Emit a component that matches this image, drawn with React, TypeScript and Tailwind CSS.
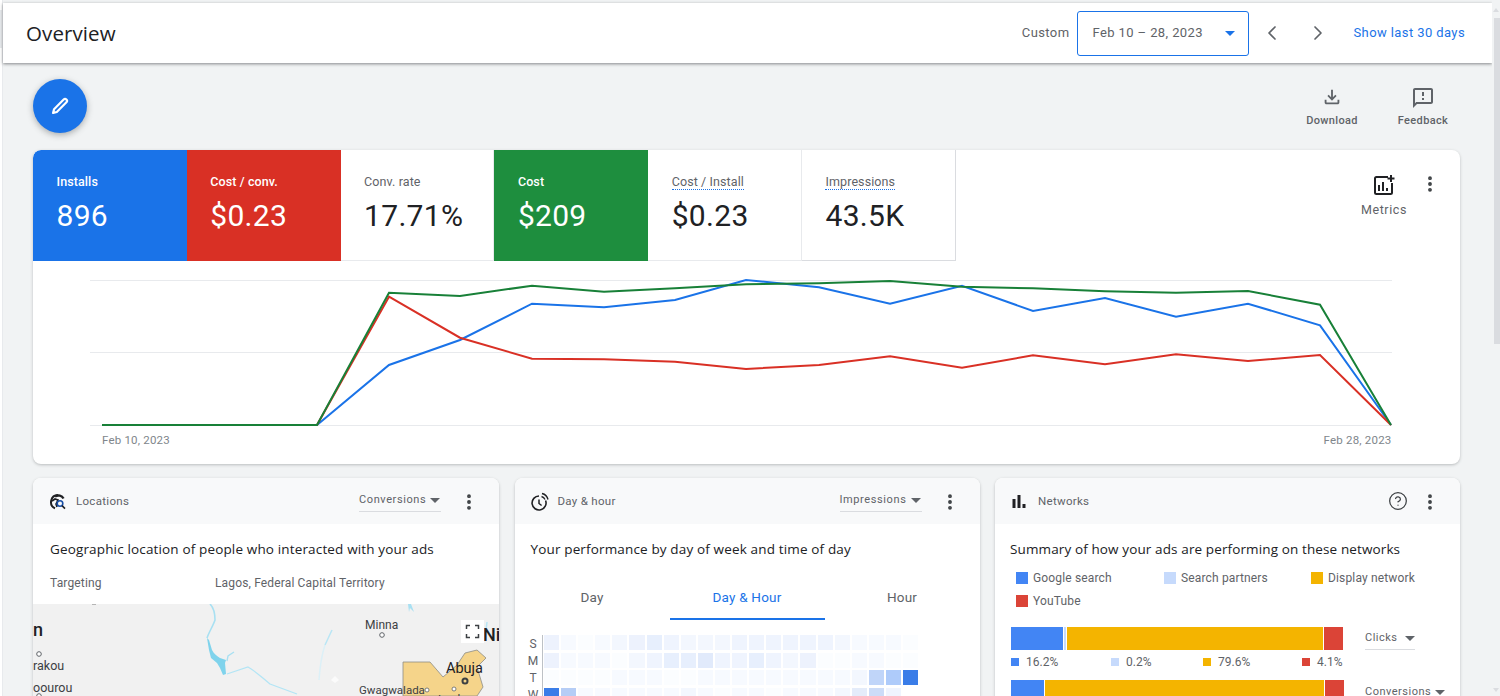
import { ChevronLeft, ChevronRight, CircleHelp, EllipsisVertical } from "lucide-react";

const sans = "font-['Roboto',sans-serif]";
const heading = "font-['Open_Sans',sans-serif]";

type Metric = {
  label: string;
  value: string;
  tile: string;
  dotted?: boolean;
};

const metrics: Metric[] = [
  { label: "Installs", value: "896", tile: "bg-[#1a73e8] text-white rounded-tl-lg" },
  { label: "Cost / conv.", value: "$0.23", tile: "bg-[#d93025] text-white" },
  { label: "Conv. rate", value: "17.71%", tile: "bg-white text-[#202124] border-r border-b border-[#e8eaed]" },
  { label: "Cost", value: "$209", tile: "bg-[#1e8e3e] text-white" },
  { label: "Cost / Install", value: "$0.23", tile: "bg-white text-[#202124] border-r border-b border-[#e8eaed]", dotted: true },
  { label: "Impressions", value: "43.5K", tile: "bg-white text-[#202124] border-r border-b border-[#dadce0]", dotted: true },
];

const chartX = [102, 174, 245, 317, 389, 460, 532, 604, 675, 746, 819, 890, 962, 1033, 1105, 1176, 1248, 1320, 1391];
const blueY = [425, 425, 425, 425, 365, 340, 303.7, 307.3, 300, 280, 287.3, 303.7, 285.7, 311, 298, 316.7, 303.7, 325.3, 425];
const redY = [425, 425, 425, 425, 296.7, 337.7, 358.7, 359.3, 361.7, 369, 365, 356.3, 367.7, 355.3, 364.3, 354.3, 361, 355, 425];
const greenY = [425, 425, 425, 425, 292.7, 296, 285.7, 291.7, 288.3, 284.3, 283.3, 281, 286.7, 288.3, 291.3, 292.7, 291, 304.7, 425];

function linePoints(ys: number[]) {
  return ys.map((y, i) => `${chartX[i] - 33},${y - 262}`).join(" ");
}

const shades: Record<string, string> = {
  a: "bg-[#fbfdff]",
  b: "bg-[#f7faff]",
  c: "bg-[#f3f7fe]",
  d: "bg-[#eff4fe]",
  e: "bg-[#edf2fd]",
  f: "bg-[#e7effd]",
  g: "bg-[#e1eafb]",
  h: "bg-[#c0d5f9]",
  i: "bg-[#aecbfa]",
  j: "bg-[#3a7de8]",
  k: "bg-[#b5cdf6]",
  l: "bg-[#e4ecfa]",
  m: "bg-[#ccdcf8]",
  z: "bg-white",
};

const heatRows = [
  { day: "S", cells: "ebabcefdcccddddddcbbba" },
  { day: "M", cells: "ebbbacdffgddfdceaabbaa" },
  { day: "T", cells: "aaaabbbaabbbbbbbbbchij" },
  { day: "W", cells: "jkbbbbbbcbabbabbbclmdz" },
];

function Kebab() {
  return <EllipsisVertical size={20} strokeWidth={2.6} className="text-[#3c4043]" />;
}

function CardHeader({ icon, title, control }: { icon: React.ReactNode; title: string; control: React.ReactNode }) {
  return (
    <div className="flex h-[46px] items-center bg-[#f8f9fa] pl-4 pr-[20px] pt-[2px]">
      <div className="flex w-[27px] justify-start">{icon}</div>
      <span className="text-[11.5px] tracking-[0.3px] text-[#5f6368]">{title}</span>
      <div className="ml-auto flex items-center">
        {control}
        <div className="ml-[18px]">
          <Kebab />
        </div>
      </div>
    </div>
  );
}

function MetricPicker({ label }: { label: string }) {
  return (
    <div className="flex h-[20px] w-[82px] items-center justify-between border-b border-[#dadce0] pb-[3px] text-[11px] tracking-[0.6px] text-[#5f6368]">
      {label}
      <span className="mr-[1px] h-0 w-0 border-x-[5px] border-t-[5px] border-x-transparent border-t-[#5f6368]" />
    </div>
  );
}

function LocationsIcon() {
  return (
    <svg width="18" height="18" viewBox="0 0 18 18" fill="none">
      <path d="M9 2a7 7 0 0 0-3 13.3" stroke="#202124" strokeWidth="2" />
      <path d="M6 3.5c3-2 7-1 8.5 2" stroke="#202124" strokeWidth="2.4" />
      <path d="M3 8l3-2 3 1-2 4 1 3" stroke="#202124" strokeWidth="1.6" />
      <circle cx="11" cy="10.5" r="2.8" stroke="#174ea6" strokeWidth="1.6" />
      <path d="M13 12.6l3 3" stroke="#202124" strokeWidth="1.6" />
    </svg>
  );
}

function ClockIcon() {
  return (
    <svg width="20" height="20" viewBox="0 0 20 20" fill="none" stroke="#202124">
      <path d="M14.6 8.5A7 7 0 1 1 8 4" strokeWidth="1.6" />
      <path d="M8 7.5v4l2.6 2" strokeWidth="1.5" />
      <path d="M10.5 4.5a5 5 0 0 1 3.5 3" strokeWidth="1.3" />
      <path d="M11 1.5a8 8 0 0 1 6 6" strokeWidth="1.4" />
    </svg>
  );
}

function BarsIcon() {
  return (
    <svg width="16" height="16" viewBox="0 0 16 16" fill="#202124">
      <rect x="1.5" y="5" width="3" height="9" />
      <rect x="6.5" y="1" width="3" height="13" />
      <rect x="11.5" y="10" width="3" height="4" />
    </svg>
  );
}

function MetricsIcon() {
  return (
    <svg width="22" height="22" viewBox="0 0 22 22" fill="none" stroke="#202124" strokeWidth="2">
      <path d="M15 3H3.5A1.5 1.5 0 0 0 2 4.5v14A1.5 1.5 0 0 0 3.5 20h14a1.5 1.5 0 0 0 1.5-1.5V9" />
      <path d="M6 11v6M10 8v9M14 14v3" />
      <path d="M18 1v7M14.5 4.5h7" />
    </svg>
  );
}

function DownloadIcon() {
  return (
    <svg width="22" height="22" viewBox="0 0 24 24" fill="#5f6368">
      <path d="M12 16l-5-5 1.4-1.45 2.6 2.6V4h2v8.15l2.6-2.6L17 11l-5 5zM6 20c-.55 0-1.02-.196-1.412-.587A1.93 1.93 0 0 1 4 18v-3h2v3h12v-3h2v3c0 .55-.196 1.02-.587 1.413A1.93 1.93 0 0 1 18 20H6z" />
    </svg>
  );
}

function FeedbackIcon() {
  return (
    <svg width="24" height="24" viewBox="0 0 24 24" fill="#5f6368">
      <path d="M20 2H4c-1.1 0-2 .9-2 2v18l4-4h14c1.1 0 2-.9 2-2V4c0-1.1-.9-2-2-2zm0 14H5.17L4 17.17V4h16v12zM11 12h2v2h-2zm0-6h2v4h-2z" />
    </svg>
  );
}

function PencilIcon() {
  return (
    <svg width="22" height="22" viewBox="0 0 24 24" fill="none" stroke="#fff" strokeWidth="2.4" strokeLinejoin="round">
      <path d="M4.5 19.5l1-4L16 5a2.1 2.1 0 0 1 3 3L8.5 18.5z" />
    </svg>
  );
}

function MapPanel() {
  return (
    <div className="relative h-[92px] overflow-hidden bg-[#f1f1f1] text-[#3c4043]">
      <svg className="absolute inset-0" width="466" height="92" viewBox="0 0 466 92" fill="none">
        <path d="M177 0c3 3 5 10 5 16-2 6-6 12-8 18" stroke="#a8e0f2" strokeWidth="1.6" />
        <path d="M194 70l21-7c6 3 12 9 22 17l27 10" stroke="#b3e5f5" strokeWidth="1.3" />
        <path d="M174 34l2 2 3 10c2 4 5 6 8 8l6 2-1 3 1 11-3 1-3-7-3-5-6-5-2-8z" fill="#7fd3ec" />
        <path d="M194 57l1-5 6-4" stroke="#a8e0f2" strokeWidth="1.3" />
        <path d="M299 26l-7 15" stroke="#b9e6f5" strokeWidth="1.5" />
        <path d="M292 41c-3 9-5 20-6 35" stroke="#dcf0f7" strokeWidth="1.5" />
        <path d="M375 0l1 8 1-4 4 4-3-8z" fill="#a8e0f2" />
        <path d="M454 18l-1 8" stroke="#b9e6f5" strokeWidth="1.5" />
        <path d="M302 72l4 4-4 3-4-3z" fill="#fbfbfb" />
        <path d="M370 92V58h27l13 15 14-12 8-12 12-3 9 8-9 9 6 20-6 9z" fill="#f5d48a" stroke="#8d8d86" strokeWidth="0.8" />
        <circle cx="349" cy="31" r="2.3" stroke="#5f6368" strokeWidth="1" fill="#fff" />
        <circle cx="6" cy="50" r="2.3" stroke="#5f6368" strokeWidth="1" fill="#fff" />
        <circle cx="6" cy="92" r="2.3" stroke="#5f6368" strokeWidth="1" fill="#fff" />
        <circle cx="432" cy="77" r="3.5" fill="#3c4043" />
        <circle cx="432" cy="77" r="1.5" fill="#f5d48a" />
        <circle cx="394" cy="86" r="2" stroke="#5f6368" strokeWidth="0.8" fill="#fff" />
        <circle cx="421" cy="85" r="2" stroke="#5f6368" strokeWidth="0.8" fill="#fff" />
        <path d="M59 0h4" stroke="#b5b5b5" strokeWidth="2" />
      </svg>
      <span className="absolute left-0 top-[15px] text-[18px] font-medium leading-[22px] text-[#202124]">n</span>
      <span className="absolute left-0 top-[54px] text-[12.5px] leading-4">rakou</span>
      <span className="absolute left-0 top-[76px] text-[12.5px] leading-4">oourou</span>
      <span className="absolute left-[332px] top-[13px] text-[12px] leading-4">Minna</span>
      <span className="absolute left-[326px] top-[78px] text-[11.5px] leading-4">Gwagwalada</span>
      <span className="absolute left-[413px] top-[55px] text-[14.5px] leading-5 text-[#202124]">Abuja</span>
      <span className="absolute left-[405px] top-[88px] text-[12px] leading-4">Lugbe</span>
      <span className="absolute left-[450px] top-[20px] text-[18px] font-medium leading-[22px] text-[#202124]">Ni</span>
      <div className="absolute left-[428px] top-[16px] flex h-[23px] w-[23px] items-center justify-center bg-white">
        <svg width="15" height="15" viewBox="0 0 15 15" fill="none" stroke="#3c4043" strokeWidth="1.5">
          <path d="M1.5 5V1.5H5M10 1.5h3.5V5M13.5 10v3.5H10M5 13.5H1.5V10" />
        </svg>
      </div>
    </div>
  );
}

function LocationsCard() {
  return (
    <section className="h-[260px] overflow-hidden rounded-t-lg bg-white shadow-[0_1px_3px_rgba(60,64,67,0.3)]">
      <CardHeader icon={<LocationsIcon />} title="Locations" control={<MetricPicker label="Conversions" />} />
      <p className={`${heading} pl-[17px] pt-4 text-[13.5px] leading-[18px] tracking-[0.15px] text-[#202124]`}>Geographic location of people who interacted with your ads</p>
      <div className="flex pl-[17px] pt-[17px] text-[12px] leading-4 tracking-[0.15px] text-[#5f6368]">
        <span className="w-[165px]">Targeting</span>
        <span>Lagos, Federal Capital Territory</span>
      </div>
      <div className="pt-[13px]">
        <MapPanel />
      </div>
    </section>
  );
}

function DayHourCard() {
  return (
    <section className="h-[260px] overflow-hidden rounded-t-lg bg-white shadow-[0_1px_3px_rgba(60,64,67,0.3)]">
      <CardHeader icon={<ClockIcon />} title="Day & hour" control={<MetricPicker label="Impressions" />} />
      <p className={`${heading} pl-[16px] pt-4 text-[13.5px] leading-[18px] tracking-[0.15px] text-[#202124]`}>Your performance by day of week and time of day</p>
      <div className="mt-[22px] flex h-[40px] text-[13.5px] tracking-[0.2px] text-[#5f6368]">
        <div className="flex w-[155px] items-center justify-center pb-[6px]">Day</div>
        <div className="flex w-[155px] items-center justify-center border-b-2 border-[#1a73e8] pb-[4px] text-[#1a73e8]">Day &amp; Hour</div>
        <div className="flex w-[155px] items-center justify-center pb-[6px]">Hour</div>
      </div>
      <div className="ml-[10px] mt-[15px] flex">
        <div className="flex w-[17px] flex-col text-[12px] text-[#5f6368]">
          {heatRows.map((row) => (
            <span key={row.day} className="flex h-[17px] items-center justify-center">{row.day}</span>
          ))}
        </div>
        <div className="grid grid-cols-[repeat(22,15.1px)] gap-[2px] border-l border-[#bdc1c6] pl-[1.5px]">
          {heatRows.flatMap((row) =>
            row.cells.split("").map((code, i) => <div key={`${row.day}-${i}`} className={`h-[15px] ${shades[code]}`} />),
          )}
        </div>
      </div>
    </section>
  );
}

function LegendItem({ color, label, width }: { color: string; label: string; width: string }) {
  return (
    <div className={`flex h-[23px] items-center ${width}`}>
      <span className={`mr-[5px] h-[12px] w-[12px] ${color}`} />
      {label}
    </div>
  );
}

function ShareLabel({ color, label, width }: { color: string; label: string; width: string }) {
  return (
    <div className={`flex items-center ${width}`}>
      <span className={`mr-[7px] h-[8px] w-[8px] ${color}`} />
      {label}
    </div>
  );
}

function NetworksCard() {
  return (
    <section className="h-[260px] overflow-hidden rounded-t-lg bg-white shadow-[0_1px_3px_rgba(60,64,67,0.3)]">
      <CardHeader
        icon={<BarsIcon />}
        title="Networks"
        control={<CircleHelp size={20} strokeWidth={1.5} className="-mr-[6px] mb-[2px] text-[#3c4043]" />}
      />
      <p className={`${heading} pl-[15px] pt-4 text-[13.5px] leading-[18px] tracking-[0.12px] text-[#202124]`}>Summary of how your ads are performing on these networks</p>
      <div className="flex flex-wrap pl-[21px] pt-[8px] text-[12px] tracking-[0.15px] text-[#5f6368]">
        <LegendItem color="bg-[#4285f4]" label="Google search" width="w-[148px]" />
        <LegendItem color="bg-[#c6dafc]" label="Search partners" width="w-[147px]" />
        <LegendItem color="bg-[#f4b400]" label="Display network" width="w-[129px]" />
        <LegendItem color="bg-[#db4437]" label="YouTube" width="w-[148px]" />
      </div>
      <div className="pl-4 pt-[15px]">
        <div className="flex items-start">
          <div className="w-[333px]">
            <div className="flex h-[23px] gap-[1px]">
              <div className="w-[52px] bg-[#4285f4]" />
              <div className="w-[2px] bg-[#c6dafc]" />
              <div className="w-[256px] bg-[#f4b400]" />
              <div className="w-[19px] bg-[#db4437]" />
            </div>
            <div className="mt-[3px] flex text-[12px] text-[#5f6368]">
              <ShareLabel color="bg-[#4285f4]" label="16.2%" width="w-[100px]" />
              <ShareLabel color="bg-[#c6dafc]" label="0.2%" width="w-[92px]" />
              <ShareLabel color="bg-[#f4b400]" label="79.6%" width="w-[99px]" />
              <ShareLabel color="bg-[#db4437]" label="4.1%" width="w-[42px]" />
            </div>
          </div>
          <div className="ml-[21px] mt-[3px] flex h-[20px] w-[50px] items-center justify-between border-b border-[#dadce0] pb-[2px] text-[11px] tracking-[0.5px] text-[#5f6368]">
            Clicks
            <span className="h-0 w-0 border-x-[5px] border-t-[5px] border-x-transparent border-t-[#5f6368]" />
          </div>
        </div>
        <div className="mt-[9px] flex items-start">
          <div className="flex h-[23px] w-[333px] gap-[1px]">
            <div className="w-[33px] bg-[#4285f4]" />
            <div className="w-[279px] bg-[#f4b400]" />
            <div className="w-[19px] bg-[#db4437]" />
          </div>
          <div className="ml-[21px] mt-[4px] flex w-[80px] items-center justify-between text-[11px] tracking-[0.5px] text-[#5f6368]">
            Conversions
            <span className="h-0 w-0 border-x-[5px] border-t-[5px] border-x-transparent border-t-[#5f6368]" />
          </div>
        </div>
      </div>
    </section>
  );
}

export default function App() {
  return (
    <div className={`${sans} flex h-[696px] w-[1500px] overflow-hidden bg-[#f1f3f4]`}>
      <div className="w-[3px] shrink-0 border-r border-[#e8eaed] bg-white pt-[10px]">
        <div className="h-[38px] bg-[#e8eaed]" />
      </div>
      <main className="w-[1489px] shrink-0">
        <header className="mt-[3px] flex h-[60px] items-center bg-white pl-[23px] pr-[27px] shadow-[0_1px_3px_rgba(60,64,67,0.6)]">
          <h1 className={`${heading} text-[20.5px] tracking-[0.1px] text-[#202124]`}>Overview</h1>
          <div className="ml-auto flex items-center">
            <span className="mr-[8px] text-[13px] tracking-[0.4px] text-[#5f6368]">Custom</span>
            <div className="flex h-[45px] w-[172px] items-center justify-between rounded-[3px] border-[1.5px] border-[#1a73e8] pl-[14px] pr-[13px] text-[13px] tracking-[0.4px] text-[#5f6368]">
              Feb 10 – 28, 2023
              <span className="h-0 w-0 border-x-[5px] border-t-[5px] border-x-transparent border-t-[#1a73e8]" />
            </div>
            <ChevronLeft size={24} strokeWidth={1.7} className="ml-[11px] text-[#5f6368]" />
            <ChevronRight size={24} strokeWidth={1.7} className="ml-[22px] text-[#5f6368]" />
            <a className="ml-[23px] text-[13px] tracking-[0.4px] text-[#1a73e8]">Show last 30 days</a>
          </div>
        </header>

        <div className="pl-[30px] pr-[32px]">
          <div className="flex h-[87px] pt-[16px]">
            <button className="flex h-[54px] w-[54px] items-center justify-center rounded-full bg-[#1a73e8] shadow-[0_2px_6px_rgba(60,64,67,0.4)]">
              <PencilIcon />
            </button>
            <div className="ml-auto flex pr-[7px] pt-[7px] text-[11px] font-medium tracking-[0.35px] text-[#5f6368]">
              <div className="flex w-[60px] flex-col items-center gap-[5px]">
                <DownloadIcon />
                Download
              </div>
              <div className="ml-[31px] flex w-[60px] flex-col items-center gap-[3px]">
                <FeedbackIcon />
                Feedback
              </div>
            </div>
          </div>

          <section className="h-[314px] overflow-hidden rounded-lg bg-white shadow-[0_1px_3px_rgba(60,64,67,0.3)]">
            <div className="flex h-[112px]">
              {metrics.map((m) => (
                <div key={m.label} className={`h-[111px] w-[153.8px] pl-[23.5px] pt-[25px] ${m.tile}`}>
                  <div className={`text-[12.5px] leading-[14px] tracking-[0.1px] ${m.tile.includes("text-white") ? "font-medium" : "text-[#5f6368]"}`}>
                    <span className={m.dotted ? "border-b border-dotted border-[#1a73e8]" : ""}>{m.label}</span>
                  </div>
                  <div className="mt-[9px] text-[30px] leading-[36px] tracking-[0.3px]">{m.value}</div>
                </div>
              ))}
              <div className="ml-auto flex pr-[20px] pt-[24px] text-[12.5px] tracking-[0.6px] text-[#5f6368]">
                <div className="flex flex-col items-center gap-[5px]">
                  <MetricsIcon />
                  Metrics
                </div>
                <div className="ml-[13px]">
                  <Kebab />
                </div>
              </div>
            </div>
            <svg width="1427" height="202" viewBox="0 0 1427 202" fill="none">
              <path d="M57 18.5H1359M57 90.5H1359M57 163.5H1359" stroke="#e8eaed" strokeWidth="1" />
              <polyline points={linePoints(blueY)} stroke="#1a73e8" strokeWidth="2" />
              <polyline points={linePoints(redY)} stroke="#d93025" strokeWidth="2" />
              <polyline points={linePoints(greenY)} stroke="#188038" strokeWidth="2" />
              <text x="69" y="182" fontSize="11.5" fill="#80868b" letterSpacing="0.2">Feb 10, 2023</text>
              <text x="1358.5" y="182" fontSize="11.5" fill="#80868b" textAnchor="end" letterSpacing="0.2">Feb 28, 2023</text>
            </svg>
          </section>

          <div className="mt-[14px] grid grid-cols-[466px_465px_465px] gap-[15.5px]">
            <LocationsCard />
            <DayHourCard />
            <NetworksCard />
          </div>
        </div>
      </main>
      <div className="flex w-[8px] shrink-0 flex-col items-end bg-[#f1f3f4] pt-[8px]">
        <span className="mr-[1px] h-0 w-0 border-x-[3px] border-b-[4px] border-x-transparent border-b-[#dadce0]" />
        <div className="mt-[6px] h-[326px] w-[6px] bg-[#dadce0]" />
        <span className="mr-[1px] mt-auto mb-[4px] h-0 w-0 border-x-[3px] border-t-[4px] border-x-transparent border-t-[#dadce0]" />
      </div>
    </div>
  );
}
